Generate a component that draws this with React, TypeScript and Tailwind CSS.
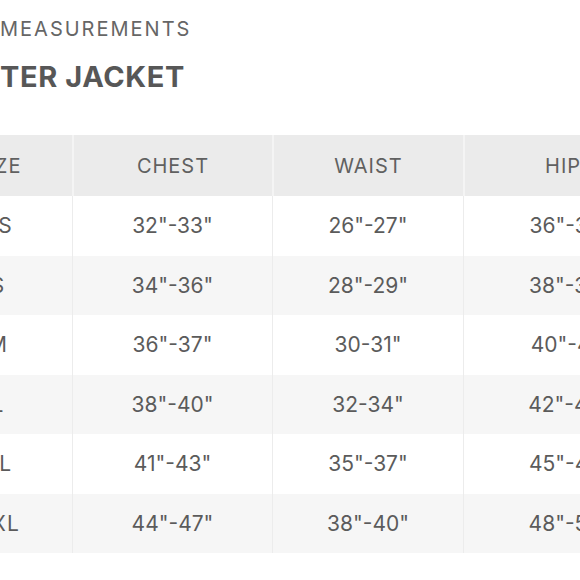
import React from "react";

const rows = [
  ["XS", "32\"-33\"", "26\"-27\"", "36\"-37\""],
  ["S", "34\"-36\"", "28\"-29\"", "38\"-39\""],
  ["M", "36\"-37\"", "30-31\"", "40\"-41\""],
  ["L", "38\"-40\"", "32-34\"", "42\"-44\""],
  ["XL", "41\"-43\"", "35\"-37\"", "45\"-47\""],
  ["XXL", "44\"-47\"", "38\"-40\"", "48\"-50\""],
];

export default function App() {
  return (
    <div
      className="w-[580px] h-[580px] overflow-hidden bg-white text-[#5b5b5b]"
      style={{ fontFamily: "Inter, 'Open Sans', sans-serif" }}
    >
      <div className="pt-[16px] text-[20px] leading-[26px] tracking-[2px] text-[#666]">
        MEASUREMENTS
      </div>
      <div className="mt-[17px] text-[29px] leading-[36px] font-bold tracking-[0.6px] text-[#575757]">
        TER JACKET
      </div>
      <div className="mt-[40px] ml-[-76px] w-[760px]">
        <div className="flex h-[61px] bg-[#ebebeb] text-[20px] tracking-[1px] text-[#606060]">
          <div className="w-[148px] flex items-center justify-center">SIZE</div>
          <div className="w-[200px] flex items-center justify-center border-l-2 border-[#f4f4f4]">CHEST</div>
          <div className="w-[191px] flex items-center justify-center border-l-2 border-[#f4f4f4]">WAIST</div>
          <div className="w-[212px] flex items-center justify-center border-l-2 border-[#f4f4f4]">HIPS</div>
        </div>
        {rows.map((r, i) => (
          <div
            key={r[0]}
            className={`flex h-[59.5px] text-[21px] ${i % 2 === 1 ? "bg-[#f6f6f6]" : "bg-white"}`}
          >
            <div className="w-[148px] flex items-center justify-center tracking-[1px]">{r[0]}</div>
            <div className="w-[200px] flex items-center justify-center border-l border-[#ececec]">{r[1]}</div>
            <div className="w-[191px] flex items-center justify-center border-l border-[#ececec]">{r[2]}</div>
            <div className="w-[212px] flex items-center justify-center border-l border-[#ececec]">{r[3]}</div>
          </div>
        ))}
      </div>
    </div>
  );
}
